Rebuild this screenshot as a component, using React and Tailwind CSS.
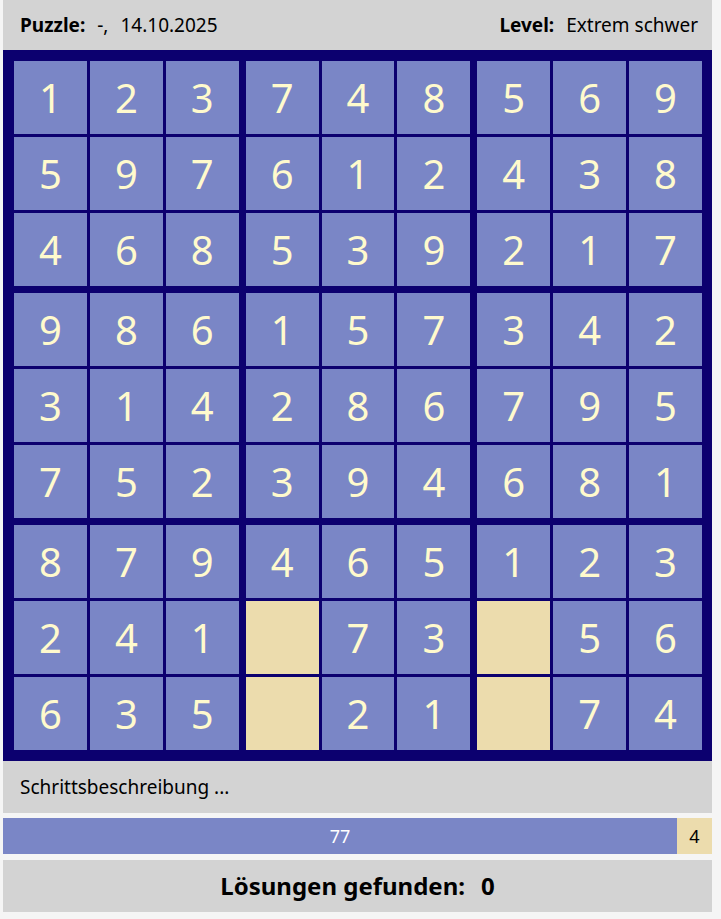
const grid = [
  "123748569",
  "597612438",
  "468539217",
  "986157342",
  "314286795",
  "752394681",
  "879465123",
  "241 73 56",
  "635 21 74",
];

function Cell({ v }) {
  const empty = v === " ";
  return (
    <div
      className={
        "flex items-center justify-center text-[40px] leading-none text-[#fffacd] " +
        (empty ? "bg-[#ecdcad]" : "bg-[#7a86c6]")
      }
    >
      {empty ? "" : v}
    </div>
  );
}

function Box({ br, bc }) {
  const cells = [];
  for (let r = 0; r < 3; r++) {
    for (let c = 0; c < 3; c++) {
      cells.push(<Cell key={r * 3 + c} v={grid[br * 3 + r][bc * 3 + c]} />);
    }
  }
  return <div className="grid grid-cols-3 grid-rows-3 gap-[3px]">{cells}</div>;
}

export default function App() {
  const boxes = [];
  for (let br = 0; br < 3; br++) {
    for (let bc = 0; bc < 3; bc++) {
      boxes.push(<Box key={br * 3 + bc} br={br} bc={bc} />);
    }
  }

  return (
    <div
      className="min-h-[919px] bg-[#f5f5f5] text-black"
      style={{ fontFamily: '"Noto Sans", "Open Sans", sans-serif' }}
    >
      <div className="ml-[3px] w-[709px] flex flex-col">
        <div className="h-[50px] bg-[#d3d3d3] flex items-center justify-between pl-[17px] pr-[14px] text-[19px]">
          <div>
            <span className="font-bold">Puzzle:</span>
            <span className="ml-3">-,</span>
            <span className="ml-3">14.10.2025</span>
          </div>
          <div>
            <span className="font-bold">Level:</span>
            <span className="ml-3">Extrem schwer</span>
          </div>
        </div>

        <div className="h-[711px] bg-[#0c006f] p-[11px] pr-[10px] grid grid-cols-3 grid-rows-3 gap-[7px]">
          {boxes}
        </div>

        <div className="h-[52px] bg-[#d3d3d3] flex items-center pl-[17px] text-[19px]">
          Schrittsbeschreibung ...
        </div>

        <div className="mt-[5px] h-[36px] flex text-[18px]">
          <div className="w-[674px] bg-[#7a86c6] text-white flex items-center justify-center">
            77
          </div>
          <div className="flex-1 bg-[#ecdcad] flex items-center justify-center">4</div>
        </div>

        <div className="mt-[6px] h-[52px] bg-[#d3d3d3] flex items-center justify-center text-[24px] font-bold">
          Lösungen gefunden:<span className="ml-4">0</span>
        </div>
      </div>
    </div>
  );
}
